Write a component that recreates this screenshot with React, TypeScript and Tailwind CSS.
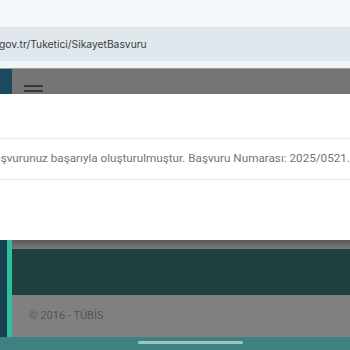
export default function App() {
  return (
    <div className="w-[350px] h-[350px] overflow-hidden flex flex-col bg-[#f3f7fa]" style={{ fontFamily: "Roboto, 'Liberation Sans', sans-serif" }}>
      <div className="h-[27px] bg-[#f4f8fb]" />
      <div className="h-[34px] bg-[#e1e8ed] flex items-center border-t border-[#dde5ea]">
        <span className="text-[10.3px] text-[#3b3b3b] whitespace-nowrap -ml-[1px]" style={{ fontFamily: "Inter, 'Liberation Sans', sans-serif" }}>gov.tr/Tuketici/SikayetBasvuru</span>
      </div>
      <div className="h-[7px] bg-[#eef4f8]" />
      <div className="h-[26px] flex bg-[#757575] border-t border-[#9a9a9a]">
        <div className="w-[12px] bg-[#1b4a5e]" />
        <div className="ml-[12px] pt-[16px] flex flex-col gap-[3px]">
          <div className="w-[19px] h-[2px] bg-[#2f3a40]" />
          <div className="w-[19px] h-[2px] bg-[#2f3a40]" />
        </div>
      </div>
      <div className="h-[146px] bg-white flex flex-col">
        <div className="h-[44px]" />
        <div className="h-[42px] border-y border-[#ececec] flex items-center overflow-hidden">
          <span className="whitespace-nowrap text-[11.7px] text-[#747474] -ml-[13px]">Başvurunuz başarıyla oluşturulmuştur. Başvuru Numarası: 2025/0521.3684</span>
        </div>
      </div>
      <div className="flex h-[97px]">
        <div className="w-[7px] bg-[#1a4152]" />
        <div className="w-[5px] bg-[#2fbf9a]" />
        <div className="flex-1 flex flex-col">
          <div className="h-[9px] bg-gradient-to-b from-[#5c5a58] to-[#7a7977]" />
          <div className="h-[46px] bg-[#1f403e]" />
          <div className="flex-1 bg-[#808080] flex items-center pl-[17px]">
            <span className="text-[11px] text-[#555]">© 2016 - TÜBİS</span>
          </div>
        </div>
      </div>
      <div className="flex-1 bg-[#3d8281] relative">
        <div className="absolute left-[138px] top-[4px] w-[105px] h-[3px] rounded-full bg-[#9cc6c5]" />
      </div>
    </div>
  );
}
